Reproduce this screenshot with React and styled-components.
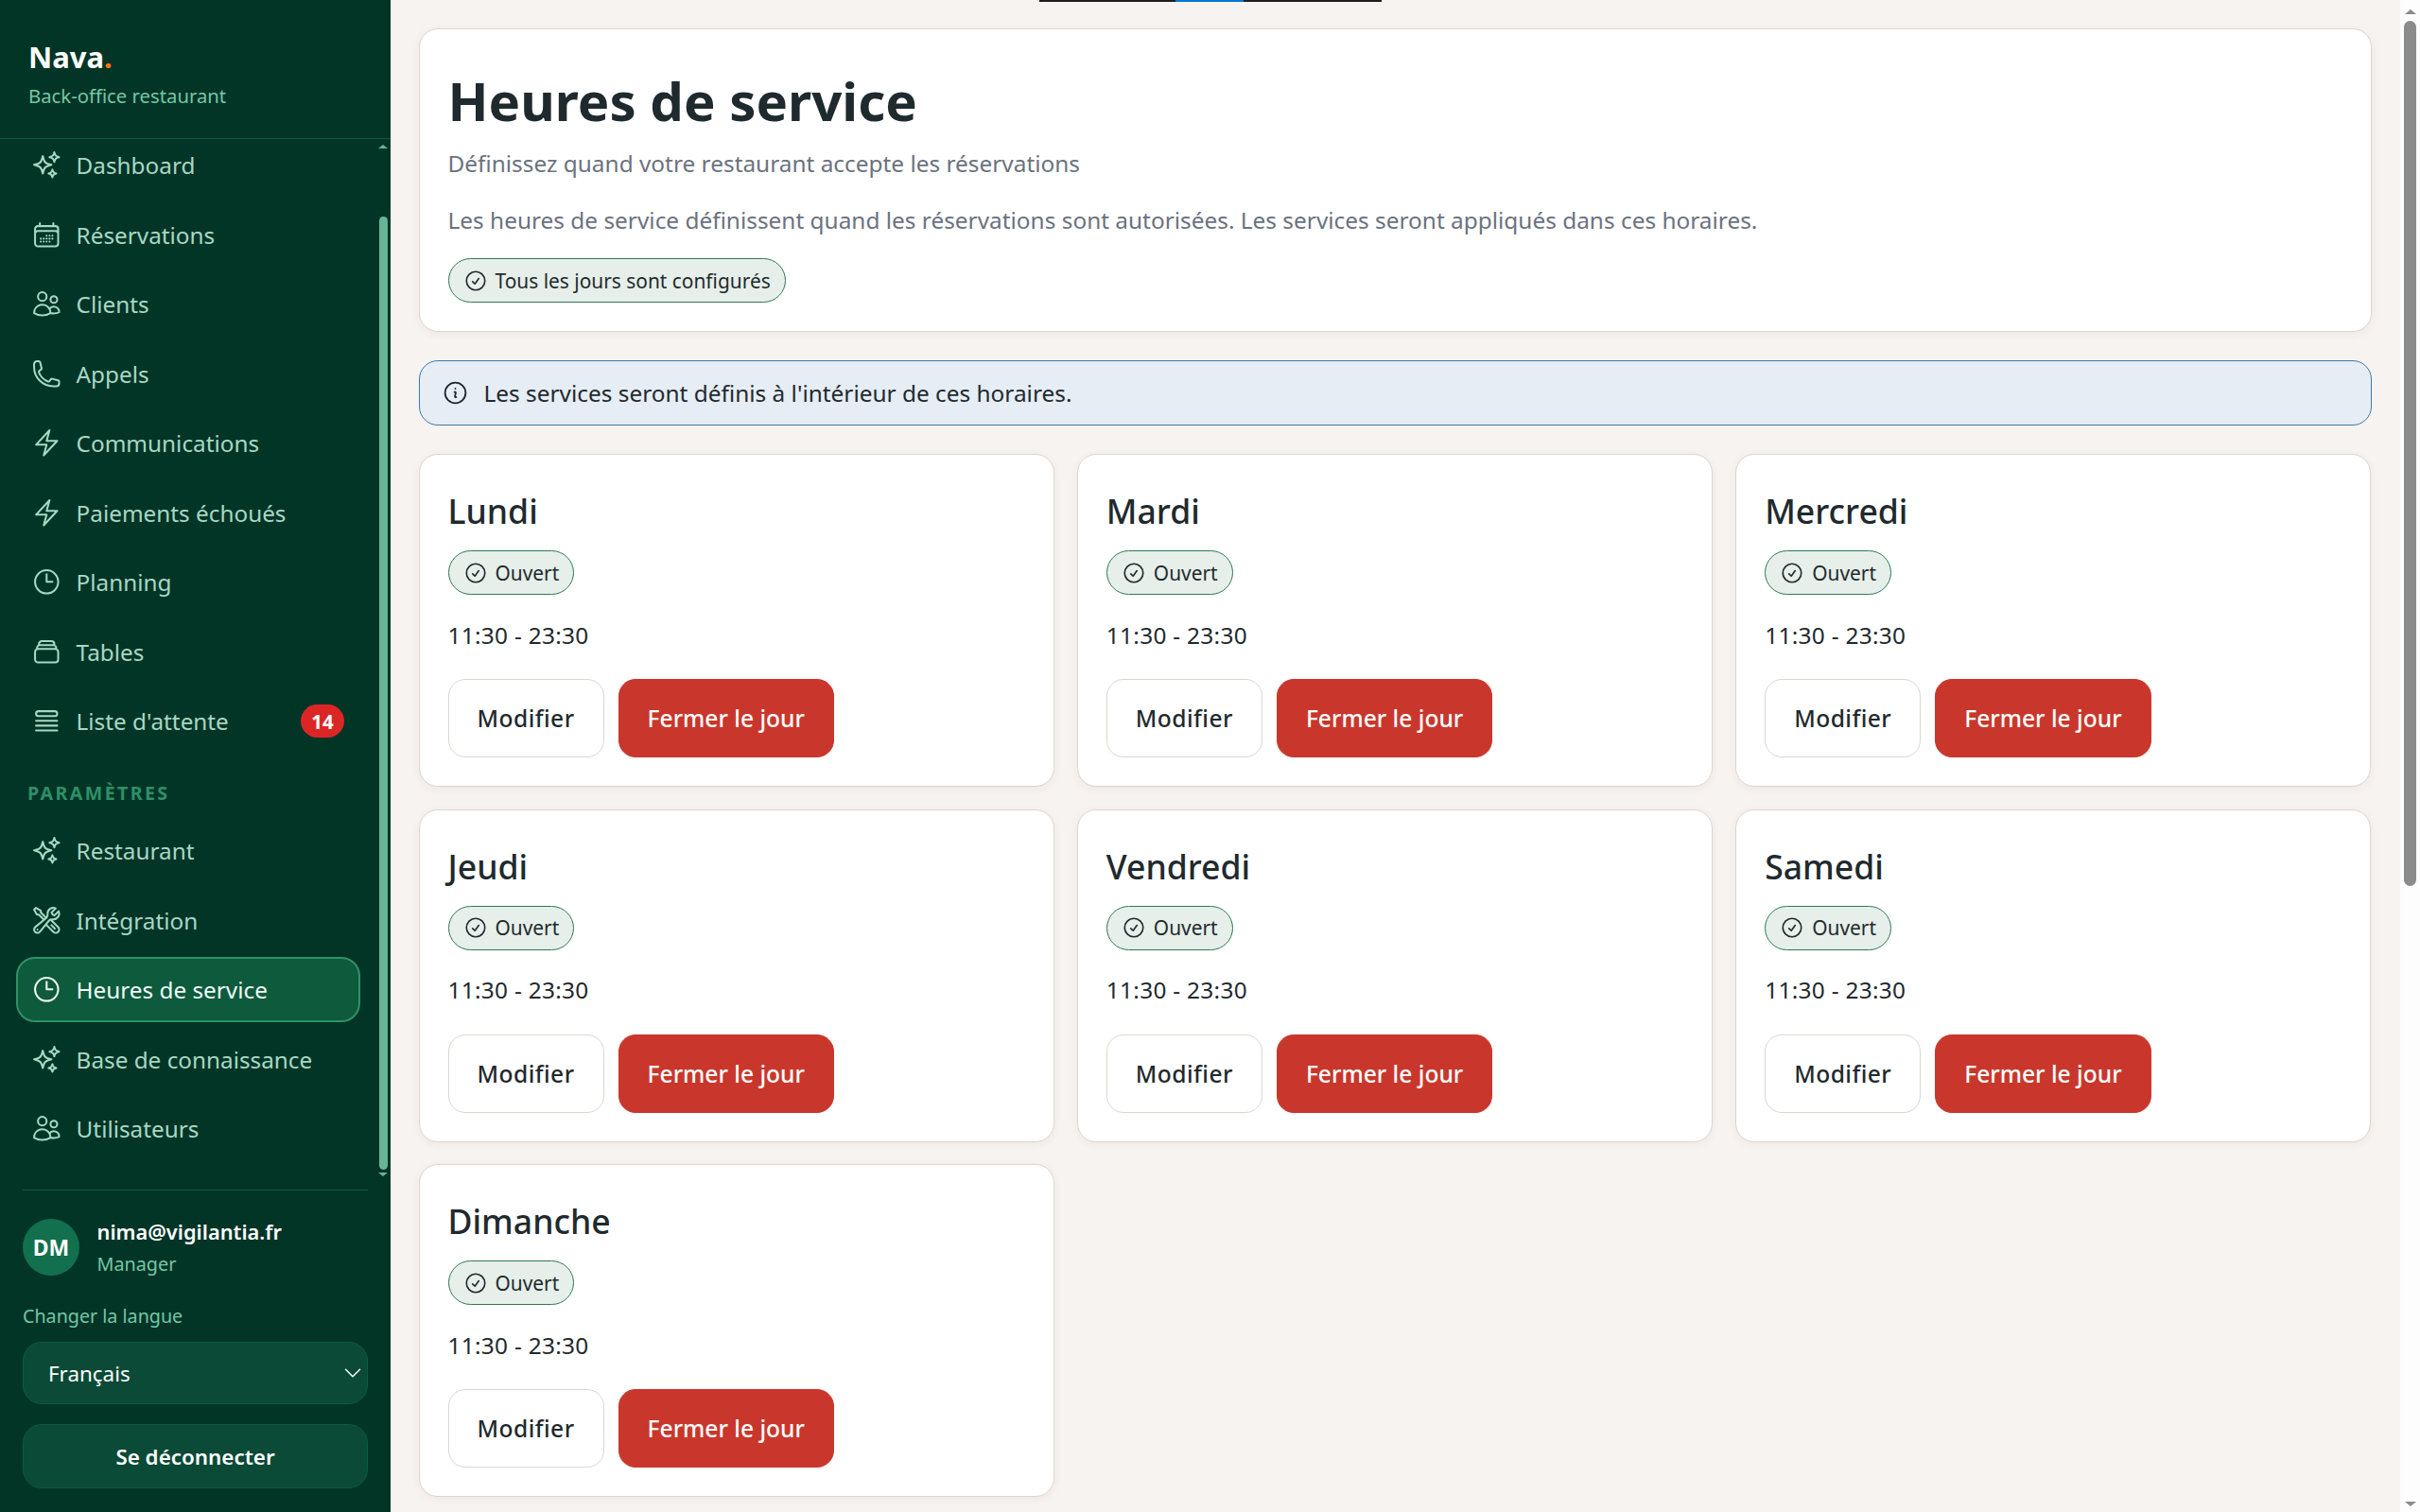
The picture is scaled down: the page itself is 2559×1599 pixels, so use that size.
import React from "react";
import styled, { createGlobalStyle } from "styled-components";
import {
  HiOutlineSparkles,
  HiOutlineCalendarDays,
  HiOutlineUsers,
  HiOutlinePhone,
  HiOutlineBolt,
  HiOutlineClock,
  HiOutlineRectangleStack,
  HiOutlineQueueList,
  HiOutlineWrenchScrewdriver,
  HiOutlineCheckCircle,
  HiOutlineInformationCircle,
  HiChevronDown,
} from "react-icons/hi2";

const GlobalStyle = createGlobalStyle`
  * { box-sizing: border-box; }
  html, body { margin: 0; height: 100%; overflow: hidden; }
  body { font-family: "Noto Sans", "Open Sans", sans-serif; background: #f7f3f0; color: #1f2a2e; }
`;

const Shell = styled.div`
  display: flex;
  height: 100vh;
  position: relative;
  overflow: hidden;
`;

const ShareBar = styled.div`
  position: absolute;
  top: 0;
  left: 1099px;
  width: 362px;
  height: 2px;
  background: linear-gradient(to right, #1e1e1e 144px, #0078d4 144px, #0078d4 216px, #1e1e1e 216px);
`;

const Sidebar = styled.aside`
  width: 413px;
  flex: none;
  display: flex;
  flex-direction: column;
  background: #033527;
`;

const Brand = styled.div`
  height: 147px;
  flex: none;
  padding: 38px 0 0 30px;
  border-bottom: 1px solid #0d5a40;
`;

const Logo = styled.div`
  font-size: 31px;
  line-height: 44px;
  font-weight: 700;
  color: #fff;
  span { color: #f97316; }
`;

const Tagline = styled.div`
  font-size: 20.3px;
  line-height: 28px;
  margin-top: 5px;
  color: #74c7a6;
`;

const NavArea = styled.div`
  flex: 1;
  min-height: 0;
  display: flex;
  padding-bottom: 14px;
`;

const NavScroller = styled.nav`
  flex: 1;
  min-width: 0;
  overflow: hidden;
  padding: 0 18px 0 17px;
`;

const NavList = styled.div`
  margin-top: -7px;
`;

const NavItem = styled.div`
  display: flex;
  align-items: center;
  gap: 15px;
  height: 69px;
  margin-bottom: 4.5px;
  padding: 0 15px;
  border: 2px solid ${(p) => (p.$active ? "#2f9168" : "transparent")};
  border-radius: 20px;
  background: ${(p) => (p.$active ? "#0d5a3c" : "transparent")};
  color: ${(p) => (p.$active ? "#f1faf6" : "#a7d8c4")};
  font-size: 24.3px;
  svg { width: 32.6px; height: 32.6px; flex: none; stroke-width: 1.5; margin-left: -1px; }
`;

const NavLabel = styled.span`
  flex: 1;
`;

const CountBadge = styled.span`
  width: 46px;
  height: 35px;
  border-radius: 18px;
  background: #dc2626;
  color: #fff;
  font-size: 20.5px;
  font-weight: 700;
  display: flex;
  align-items: center;
  justify-content: center;
`;

const SectionLabel = styled.div`
  padding: 25.6px 0 14px 12px;
  font-size: 19.6px;
  line-height: 24px;
  font-weight: 700;
  letter-spacing: 2.4px;
  color: #2e9068;
`;

const SideRail = styled.div`
  width: 12px;
  margin-right: 2px;
  flex: none;
  display: flex;
  flex-direction: column;
  align-items: center;
`;

const Arrow = styled.i`
  display: block;
  flex: none;
  width: 0;
  height: 0;
  margin-top: ${(p) => p.$top || 0}px;
  border-left: ${(p) => p.$size}px solid transparent;
  border-right: ${(p) => p.$size}px solid transparent;
  ${(p) => (p.$down ? "border-top" : "border-bottom")}: ${(p) => p.$size - 1}px solid ${(p) => p.$color};
`;

const SideThumb = styled.div`
  width: 9px;
  flex: 1;
  margin: 72px 0 3px;
  border-radius: 5px;
  background: #66b596;
`;

const SideFooter = styled.div`
  flex: none;
  height: 341px;
  margin: 0 24px;
  padding-top: 30px;
  border-top: 1px solid #0d5a40;
`;

const UserRow = styled.div`
  display: flex;
  align-items: center;
  gap: 18.5px;
  height: 60px;
`;

const Avatar = styled.div`
  width: 60px;
  height: 60px;
  flex: none;
  border-radius: 50%;
  background: #12704f;
  color: #fff;
  font-size: 23px;
  font-weight: 700;
  display: flex;
  align-items: center;
  justify-content: center;
`;

const UserMail = styled.div`
  font-size: 21.8px;
  line-height: 33px;
  font-weight: 600;
  color: #fff;
`;

const UserRole = styled.div`
  margin-top: 3px;
  font-size: 19.8px;
  line-height: 30px;
  color: #74c7a6;
`;

const LangLabel = styled.div`
  margin-top: 28px;
  font-size: 19.7px;
  line-height: 30px;
  color: #74c7a6;
`;

const LangSelect = styled.div`
  height: 66px;
  margin-top: 12px;
  padding: 0 3px 0 26px;
  display: flex;
  align-items: center;
  justify-content: space-between;
  background: #0a4a36;
  border: 1px solid #0d5a40;
  border-radius: 20px;
  font-size: 22.4px;
  color: #fff;
  svg { width: 24px; height: 24px; }
`;

const LogoutButton = styled.div`
  height: 68px;
  margin-top: 21px;
  display: flex;
  align-items: center;
  justify-content: center;
  background: #0a4a36;
  border: 1px solid #0d5a40;
  border-radius: 20px;
  font-size: 22.4px;
  font-weight: 600;
  color: #fff;
`;

const Main = styled.main`
  flex: 1;
  min-width: 0;
  overflow: hidden;
  padding: 29.5px 30.5px 0 29.5px;
`;

const Panel = styled.div`
  background: #fff;
  border: 1px solid #ddd6cf;
  border-radius: 20px;
  box-shadow: 0 2px 10px rgba(60, 50, 40, 0.06);
  padding: 30px;
`;

const Title = styled.h1`
  margin: 0;
  font-size: 56.3px;
  line-height: 90px;
  font-weight: 700;
  color: #1f2a2e;
`;

const Muted = styled.p`
  margin: ${(p) => p.$gap}px 0 0;
  font-size: 24.4px;
  line-height: 39px;
  color: #6b7280;
`;

const StatusPill = styled.div`
  display: flex;
  width: fit-content;
  align-items: center;
  gap: 8px;
  height: 47px;
  margin-top: ${(p) => p.$gap}px;
  padding: 0 15px;
  background: #e6efe9;
  border: 1px solid #2f7a55;
  border-radius: 24px;
  font-size: 20.9px;
  color: #1f2a2e;
  svg { width: 26px; height: 26px; flex: none; }
`;

const Notice = styled.div`
  display: flex;
  align-items: center;
  gap: 16px;
  height: 69px;
  margin: 30px 0 30px;
  padding: 0 23px;
  background: #e6edf5;
  border: 1px solid #3e78a5;
  border-radius: 20px;
  font-size: 24.4px;
  color: #1f2a2e;
  svg { width: 29px; height: 29px; flex: none; }
`;

const DayGrid = styled.div`
  display: grid;
  grid-template-columns: repeat(3, 1fr);
  gap: 23.6px 24px;
`;

const DayName = styled.h3`
  margin: 0;
  font-size: 35.6px;
  line-height: 58px;
  font-weight: 500;
  color: #1f2a2e;
`;

const Hours = styled.div`
  margin-top: 22.5px;
  font-size: 24.4px;
  line-height: 39px;
  letter-spacing: 0.3px;
  color: #1f2a2e;
`;

const Actions = styled.div`
  display: flex;
  gap: 15px;
  margin-top: 27.5px;
`;

const ActionButton = styled.div`
  height: 83px;
  padding: 0 30px;
  display: flex;
  align-items: center;
  border-radius: 18px;
  font-size: 24.6px;
  font-weight: 500;
  letter-spacing: ${(p) => (p.$danger ? 0 : 0.45)}px;
  background: ${(p) => (p.$danger ? "#c9372c" : "#fff")};
  color: ${(p) => (p.$danger ? "#fff" : "#1f2a2e")};
  border: 1px solid ${(p) => (p.$danger ? "#c9372c" : "#ddd6cf")};
`;

const PageRail = styled.div`
  width: 21px;
  flex: none;
  display: flex;
  flex-direction: column;
  align-items: center;
  background: #fdfdfd;
  padding: 10px 0 6px;
`;

const PageThumb = styled.div`
  width: 13px;
  height: 915px;
  margin-top: 7px;
  border-radius: 7px;
  background: #8b8b8b;
`;

const RailGap = styled.div`
  flex: 1;
`;

const mainNav = [
  { label: "Dashboard", Icon: HiOutlineSparkles },
  { label: "Réservations", Icon: HiOutlineCalendarDays },
  { label: "Clients", Icon: HiOutlineUsers },
  { label: "Appels", Icon: HiOutlinePhone },
  { label: "Communications", Icon: HiOutlineBolt },
  { label: "Paiements échoués", Icon: HiOutlineBolt },
  { label: "Planning", Icon: HiOutlineClock },
  { label: "Tables", Icon: HiOutlineRectangleStack },
  { label: "Liste d'attente", Icon: HiOutlineQueueList, count: 14 },
];

const settingsNav = [
  { label: "Restaurant", Icon: HiOutlineSparkles },
  { label: "Intégration", Icon: HiOutlineWrenchScrewdriver },
  { label: "Heures de service", Icon: HiOutlineClock, active: true },
  { label: "Base de connaissance", Icon: HiOutlineSparkles },
  { label: "Utilisateurs", Icon: HiOutlineUsers },
];

const days = ["Lundi", "Mardi", "Mercredi", "Jeudi", "Vendredi", "Samedi", "Dimanche"];

const NavEntry = ({ item }) => (
  <NavItem $active={item.active}>
    <item.Icon />
    <NavLabel>{item.label}</NavLabel>
    {item.count && <CountBadge>{item.count}</CountBadge>}
  </NavItem>
);

const DayCard = ({ name }) => (
  <Panel>
    <DayName>{name}</DayName>
    <StatusPill $gap={13}>
      <HiOutlineCheckCircle />
      Ouvert
    </StatusPill>
    <Hours>11:30 - 23:30</Hours>
    <Actions>
      <ActionButton>Modifier</ActionButton>
      <ActionButton $danger>Fermer le jour</ActionButton>
    </Actions>
  </Panel>
);

const App = () => (
  <Shell>
    <GlobalStyle />
    <ShareBar />
    <Sidebar>
      <Brand>
        <Logo>
          Nava<span>.</span>
        </Logo>
        <Tagline>Back-office restaurant</Tagline>
      </Brand>
      <NavArea>
        <NavScroller>
          <NavList>
            {mainNav.map((item) => (
              <NavEntry key={item.label} item={item} />
            ))}
            <SectionLabel>PARAMÈTRES</SectionLabel>
            {settingsNav.map((item) => (
              <NavEntry key={item.label} item={item} />
            ))}
          </NavList>
        </NavScroller>
        <SideRail>
          <Arrow $size={5} $top={6} $color="#66b596" />
          <SideThumb />
          <Arrow $size={5} $down $color="#66b596" />
        </SideRail>
      </NavArea>
      <SideFooter>
        <UserRow>
          <Avatar>DM</Avatar>
          <div>
            <UserMail>nima@vigilantia.fr</UserMail>
            <UserRole>Manager</UserRole>
          </div>
        </UserRow>
        <LangLabel>Changer la langue</LangLabel>
        <LangSelect>
          Français
          <HiChevronDown />
        </LangSelect>
        <LogoutButton>Se déconnecter</LogoutButton>
      </SideFooter>
    </Sidebar>
    <Main>
      <Panel>
        <Title>Heures de service</Title>
        <Muted $gap={2}>Définissez quand votre restaurant accepte les réservations</Muted>
        <Muted $gap={21}>
          Les heures de service définissent quand les réservations sont autorisées. Les services seront appliqués dans ces horaires.
        </Muted>
        <StatusPill $gap={21.5}>
          <HiOutlineCheckCircle />
          Tous les jours sont configurés
        </StatusPill>
      </Panel>
      <Notice>
        <HiOutlineInformationCircle />
        Les services seront définis à l'intérieur de ces horaires.
      </Notice>
      <DayGrid>
        {days.map((d) => (
          <DayCard key={d} name={d} />
        ))}
      </DayGrid>
    </Main>
    <PageRail>
      <Arrow $size={6} $color="#8b8b8b" />
      <PageThumb />
      <RailGap />
      <Arrow $size={6} $down $color="#8b8b8b" />
    </PageRail>
  </Shell>
);

export default App;
